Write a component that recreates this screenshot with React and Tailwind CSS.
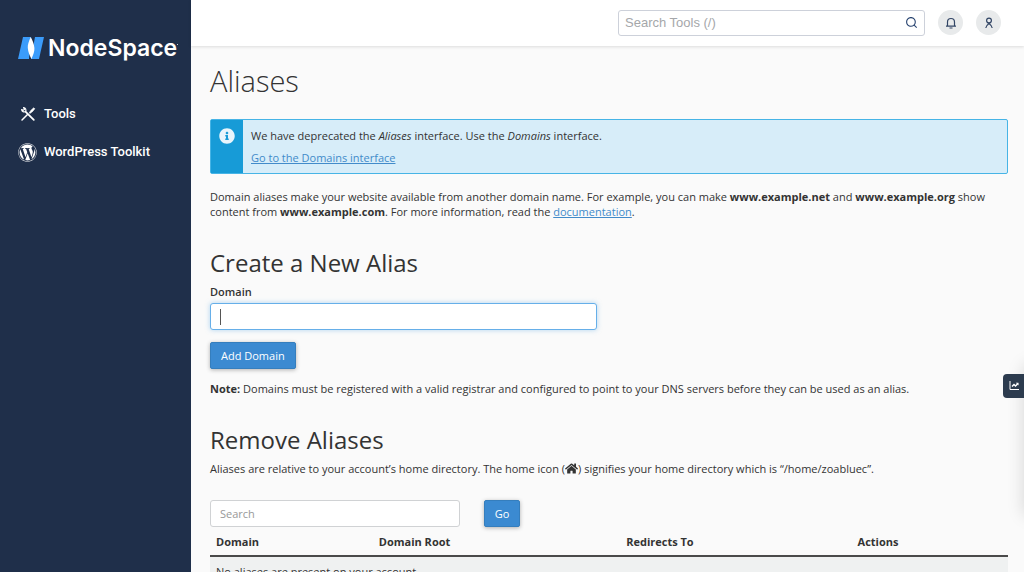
import { useState } from 'react';
import { FaWordpress, FaInfoCircle, FaHome } from 'react-icons/fa';
import { RiSearchLine } from 'react-icons/ri';

const columns = [
  { name: 'Domain', width: 'w-[20.4%]' },
  { name: 'Domain Root', width: 'w-[31%]' },
  { name: 'Redirects To', width: 'w-[29%]' },
  { name: 'Actions', width: 'w-[19.6%]' },
];

const LogoMark = () => (
  <svg viewBox="0 0 26 22" className="h-[22px] w-[26px]" aria-hidden="true">
    <path d="M5 0h8l-2 22H0z" fill="#3b9cfb" />
    <path d="M17 0h9l-5 22h-8z" fill="#3b9cfb" />
    <path d="M12.800 0c-2 4-3.300 8-3 11 .4 4 1.800 7.500 3.600 11 1.800-4 3.300-8 3-11-.4-4-1.800-7.500-3.600-11z" fill="#fff" />
  </svg>
);

const ToolsIcon = () => (
  <svg viewBox="0 0 16 16" className="h-4 w-4" fill="none" stroke="#fff" aria-hidden="true">
    <path d="M2 14 7.500 8.500" strokeWidth="1.500" strokeLinecap="round" />
    <path d="M9.200 6.800l2-2.800 2.600-2.200 1 1-2.200 2.600-2.600 2z" fill="#fff" strokeWidth="0.600" />
    <path d="M5.700 5.800 13.800 13.800" strokeWidth="1.800" strokeLinecap="round" />
    <path d="M3.600 1.600a2.700 2.700 0 0 1 2 4 2.700 2.700 0 0 1-4-2l2 .6.900-.9z" strokeWidth="1.200" strokeLinejoin="round" />
  </svg>
);

const BellIcon = () => (
  <svg viewBox="0 0 12 12" className="h-3 w-3" fill="none" stroke="#324565" strokeWidth="1.200" aria-hidden="true">
    <path d="M2.500 9V5a3.500 3.500 0 0 1 7 0v4M1 9.200h10M4.500 11h3" />
  </svg>
);

const UserIcon = () => (
  <svg viewBox="0 0 12 12" className="h-3 w-3" fill="none" stroke="#324565" strokeWidth="1.200" aria-hidden="true">
    <circle cx="6" cy="3.600" r="2.400" />
    <path d="M2.800 11C2.800 8.500 4.500 7.800 7.500 5.500M9.200 11C9.200 8.500 7.500 7.800 4.500 5.500" />
  </svg>
);

const ChartIcon = () => (
  <svg viewBox="0 0 10 10" className="size-[10px]" fill="none" stroke="#fff" aria-hidden="true">
    <path d="M1 0v8.500h9" strokeWidth="1" />
    <path d="M3 5.500 5 3.500l1.500 1.500L9 2.500" strokeWidth="1.500" />
    <path d="M6.800 1.700H9.500v2.700z" fill="#fff" stroke="none" />
  </svg>
);

const Sidebar = () => (
  <aside className="w-[191px] shrink-0 bg-[#1f2f4a] text-white">
    <a href="#home" className="mt-9 ml-[18px] flex items-center gap-1">
      <LogoMark />
      <span className="font-['Inter',sans-serif] text-[23px] leading-6 font-semibold">NodeSpace</span>
      <span className="-ml-1 mb-2 size-px rounded-full bg-white" />
    </a>
    <nav className="mt-[42px] flex flex-col gap-[14px] pl-[18px] font-['Roboto',sans-serif] text-[13px] leading-6 font-medium">
      <a href="#tools" className="flex items-center gap-[7px]">
        <span className="flex w-[19px] justify-center"><ToolsIcon /></span>
        Tools
      </a>
      <a href="#wordpress" className="flex items-center gap-[7px]">
        <FaWordpress className="size-[19px]" />
        WordPress Toolkit
      </a>
    </nav>
  </aside>
);

const Header = () => (
  <header className="flex h-[46px] shrink-0 items-center justify-end gap-[13px] bg-white pr-[23px] pb-px shadow-[0_1px_3px_rgba(0,0,0,0.12)]">
    <div className="flex h-[26px] w-[307px] items-center rounded-[3px] border border-[#cdd1da] px-[6px]">
      <input
        type="text"
        aria-label="Search Tools"
        placeholder="Search Tools (/)"
        className="min-w-0 flex-1 font-['Liberation_Sans',sans-serif] text-[13px] outline-none placeholder:text-[#a5a7aa]"
      />
      <button aria-label="Search"><RiSearchLine className="size-[13px] text-[#2b4672]" /></button>
    </div>
    <button aria-label="Notifications" className="flex size-[25px] items-center justify-center rounded-full bg-[#e8eaeb]">
      <BellIcon />
    </button>
    <button aria-label="Account" className="flex size-[25px] items-center justify-center rounded-full bg-[#e8eaeb]">
      <UserIcon />
    </button>
  </header>
);

const App = () => {
  const [domain, setDomain] = useState('');
  const [search, setSearch] = useState('');

  return (
    <div className="flex h-screen overflow-hidden bg-[#fafafa] font-['Open_Sans',sans-serif] text-[11px] leading-[15px] text-[#333]">
      <Sidebar />
      <div className="flex min-w-0 flex-1 flex-col">
        <Header />
        <main className="min-h-0 flex-1 overflow-hidden pt-[15px] pr-4 pl-[19px]">
          <h1 className="text-[29px] leading-10 font-light">Aliases</h1>

          {/* Deprecation notice */}
          <div className="mt-[18px] flex rounded-xs border border-[#46b4e6] bg-[#d7edf9]">
            <div className="flex w-8 shrink-0 justify-center bg-[#179bd7] pt-2">
              <FaInfoCircle className="size-4 text-[#e8f5fc]" />
            </div>
            <div className="flex flex-col items-start gap-[7px] px-2 py-2">
              <p>We have deprecated the <em>Aliases</em> interface. Use the <em>Domains</em> interface.</p>
              <a href="#domains" className="text-[#428bca] underline">Go to the Domains interface</a>
            </div>
          </div>

          <p className="mt-[15px]">
            Domain aliases make your website available from another domain name. For example, you can make <b>www.example.net</b> and <b>www.example.org</b> show content from <b>www.example.com</b>. For more information, read the <a href="#documentation" className="text-[#428bca] underline">documentation</a>.
          </p>

          {/* Create alias */}
          <h2 className="mt-7 text-2xl leading-8">Create a New Alias</h2>
          <label htmlFor="domain" className="mt-[5px] block font-semibold">Domain</label>
          <div className="relative mt-1 w-[387px] max-w-full">
            <input
              id="domain"
              type="text"
              value={domain}
              onChange={(e) => setDomain(e.target.value)}
              className="block h-[27px] w-full rounded-[3px] border border-[#66afe9] bg-white px-[10px] caret-transparent shadow-[0_0_5px_rgba(102,175,233,0.5)] outline-none"
            />
            <span className="pointer-events-none absolute top-[6px] left-[10px] h-4 w-px bg-[#555]" />
          </div>
          <button className="mt-3 block h-[27px] rounded-xs border border-[#357ebd] bg-[#3b8ad1] px-[10px] text-white shadow-[0_1px_4px_rgba(0,0,0,0.3)]">
            Add Domain
          </button>
          <p className="mt-3">
            <b>Note:</b> Domains must be registered with a valid registrar and configured to point to your DNS servers before they can be used as an alias.
          </p>

          {/* Remove aliases */}
          <h2 className="mt-7 text-2xl leading-8">Remove Aliases</h2>
          <p className="mt-[5px]">
            Aliases are relative to your account’s home directory. The home icon (<FaHome className="inline size-[13px] align-[-2px]" />) signifies your home directory which is “/home/zoabluec”.
          </p>
          <div className="mt-6 flex gap-6">
            <input
              type="text"
              aria-label="Search aliases"
              placeholder="Search"
              value={search}
              onChange={(e) => setSearch(e.target.value)}
              className="h-[27px] w-[250px] rounded-[3px] border border-[#d0d2d4] bg-white px-[9px] outline-none placeholder:text-[#999]"
            />
            <button className="h-[27px] w-9 rounded-xs border border-[#357ebd] bg-[#3b8ad1] text-white shadow-[0_1px_4px_rgba(0,0,0,0.3)]">Go</button>
          </div>
          <table className="w-full table-fixed text-left">
            <thead>
              <tr className="h-[29px] border-b-2 border-[#4a4a4a]">
                {columns.map((col) => (
                  <th key={col.name} className={`${col.width} px-[6px] font-bold`}>{col.name}</th>
                ))}
              </tr>
            </thead>
            <tbody>
              <tr className="h-[30px] bg-[#eff1f1]">
                <td colSpan={4} className="px-[6px]">No aliases are present on your account.</td>
              </tr>
            </tbody>
          </table>
        </main>
      </div>

      {/* Statistics drawer, closed: only its shadow and handle show */}
      <div className="fixed top-[365px] left-full h-[150px] w-40 shadow-[0_0_16px_rgba(0,0,0,0.15)]" />
      <button aria-label="Statistics" className="fixed top-[374px] right-0 flex h-6 w-[21px] items-center justify-center rounded-l-sm bg-[#2c3b4e]">
        <ChartIcon />
      </button>
    </div>
  );
};

export default App;
